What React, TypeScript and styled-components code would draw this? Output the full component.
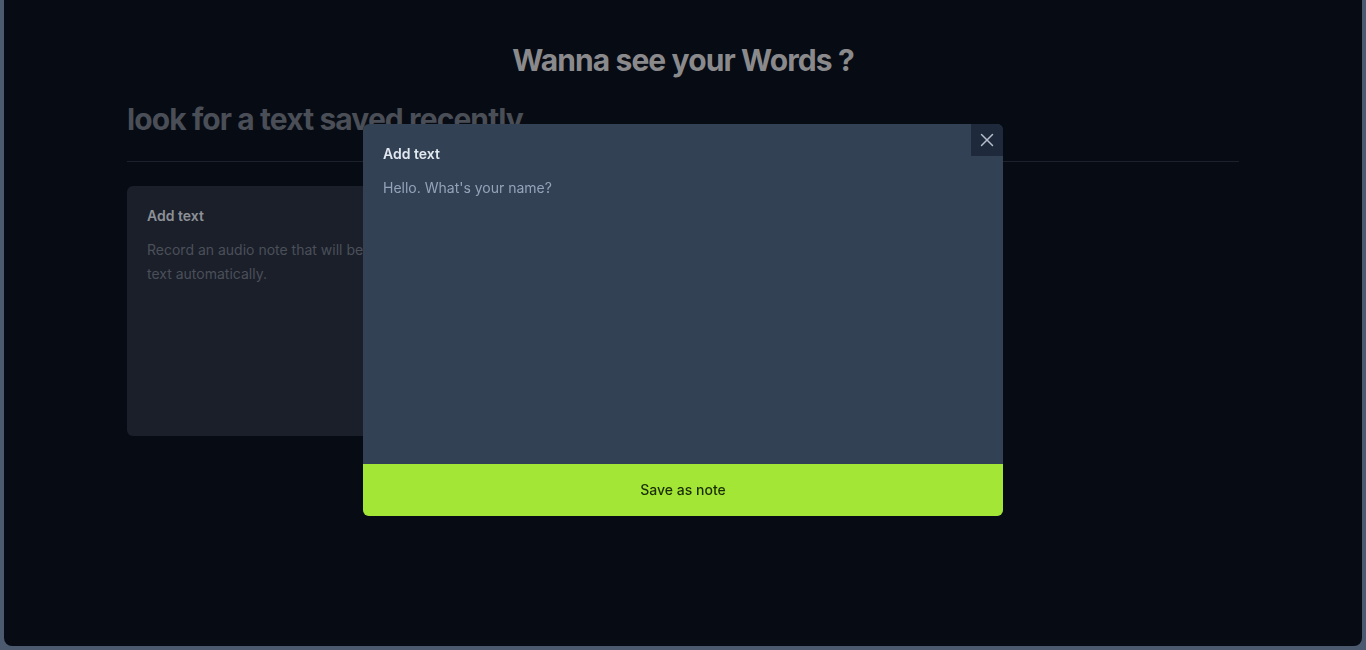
import React from "react";
import styled, { createGlobalStyle } from "styled-components";

const Global = createGlobalStyle`
  html, body { margin: 0; padding: 0; background: #4b5a6f; }
  body { font-family: Inter, "Noto Sans", sans-serif; }
  * { box-sizing: border-box; }
`;

const Frame = styled.div`
  height: 650px;
  padding: 0 4px 4px 4px;
  background: #4b5a6f;
`;

const Panel = styled.main`
  height: 100%;
  background: #070b14;
  border-radius: 0 0 8px 8px;
  padding: 42px 123px 0 123px;
  display: flex;
  flex-direction: column;
`;

const Title = styled.h1`
  margin: 0;
  text-align: center;
  font-size: 30px;
  line-height: 36px;
  font-weight: 700;
  color: #8a8a8c;
  letter-spacing: -0.9px;
`;

const Subtitle = styled.h2`
  margin: 23px 0 0 0;
  font-size: 30px;
  line-height: 36px;
  font-weight: 700;
  color: #4a4e56;
  letter-spacing: -0.9px;
`;

const Divider = styled.hr`
  margin: 24px 0 0 0;
  border: none;
  height: 1px;
  background: #1c212b;
`;

const Grid = styled.section`
  margin-top: 24px;
  display: grid;
  grid-template-columns: repeat(3, 1fr);
  gap: 24px;
`;

const Card = styled.div`
  height: 250px;
  background: #1b1f29;
  border-radius: 6px;
  padding: 20px;
`;

const CardTitle = styled.h3`
  margin: 0;
  font-size: 14px;
  line-height: 20px;
  font-weight: 600;
  color: #8d9097;
`;

const CardText = styled.p`
  margin: 12px 0 0 0;
  font-size: 14px;
  line-height: 24px;
  color: #4a4f5a;
`;

const Modal = styled.div`
  position: fixed;
  top: 124px;
  left: 50%;
  transform: translateX(-50%);
  width: 640px;
  height: 392px;
  background: #334155;
  border-radius: 6px;
  overflow: hidden;
  display: flex;
  flex-direction: column;
`;

const CloseButton = styled.button`
  position: absolute;
  top: 0;
  right: 0;
  width: 32px;
  height: 32px;
  border: none;
  background: #1e293b;
  color: #b4bdc9;
  display: flex;
  align-items: center;
  justify-content: center;
  padding: 0;
  cursor: pointer;
`;

const ModalBody = styled.div`
  flex: 1;
  padding: 20px 20px 0 20px;
  display: flex;
  flex-direction: column;
`;

const ModalTitle = styled.h3`
  margin: 0;
  font-size: 14px;
  line-height: 20px;
  font-weight: 600;
  color: #e2e8f0;
`;

const TextArea = styled.div`
  margin-top: 14px;
  flex: 1;
  font-size: 14px;
  line-height: 20px;
  color: #94a3b8;
`;

const SaveButton = styled.button`
  height: 52px;
  border: none;
  padding: 0 0 2px 0;
  background: #a3e635;
  color: #1a2e05;
  font-family: Inter, "Noto Sans", sans-serif;
  font-size: 14px;
  font-weight: 500;
  cursor: pointer;
`;

export default function App() {
  return (
    <>
      <Global />
      <Frame>
        <Panel>
          <Title>Wanna see your Words ?</Title>
          <Subtitle>look for a text saved recently</Subtitle>
          <Divider />
          <Grid>
            <Card>
              <CardTitle>Add text</CardTitle>
              <CardText>
                Record an audio note that will be converted to text automatically.
              </CardText>
            </Card>
          </Grid>
        </Panel>
      </Frame>
      <Modal>
        <CloseButton aria-label="close">
          <svg width="22" height="22" viewBox="0 0 24 24" fill="none" stroke="currentColor" strokeWidth="1.6" strokeLinecap="round">
            <path d="M18 6 6 18" />
            <path d="m6 6 12 12" />
          </svg>
        </CloseButton>
        <ModalBody>
          <ModalTitle>Add text</ModalTitle>
          <TextArea>Hello. What's your name?</TextArea>
        </ModalBody>
        <SaveButton>Save as note</SaveButton>
      </Modal>
    </>
  );
}
